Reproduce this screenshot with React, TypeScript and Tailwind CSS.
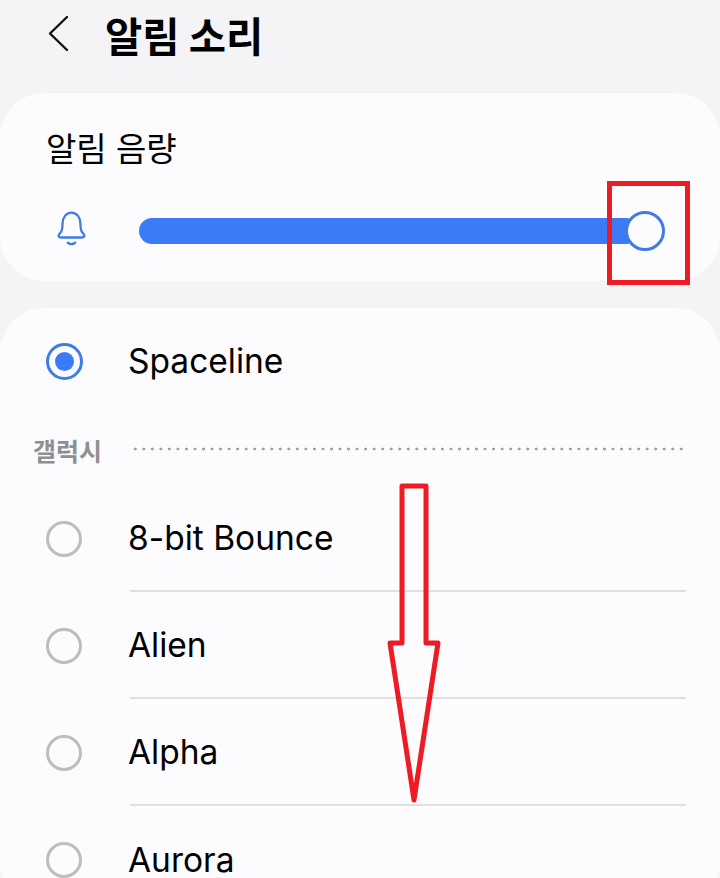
const sounds = ['8-bit Bounce', 'Alien', 'Alpha', 'Aurora'];

export default function App() {
  return (
    <div
      className="relative h-[878px] w-[720px] overflow-hidden bg-[#f4f4f6] text-black"
      style={{ fontFamily: 'Inter, "Noto Sans CJK KR", sans-serif' }}
    >
      {/* Header */}
      <div className="flex h-[93px] items-start pl-[44px] pt-[9px]">
        <svg width="28" height="40" viewBox="0 0 28 40" fill="none" className="mt-[6px]">
          <path d="M23 2 L6 18.500 L23 35" stroke="#111" strokeWidth="2.400" strokeLinecap="round" strokeLinejoin="round" />
        </svg>
        <h1 className="ml-[33px] text-[40.500px] font-bold leading-[52px]" style={{ fontFamily: '"Noto Sans CJK KR", sans-serif' }}>알림 소리</h1>
      </div>

      {/* Volume card */}
      <div className="h-[188px] rounded-[44px] bg-[#fcfcff] pl-[46px] pt-[34px]">
        <div className="text-[33px] leading-[44px]">알림 음량</div>
        <div className="mt-[44px] flex items-center">
          <svg width="36" height="38" viewBox="0 0 32 36" fill="none" stroke="#3f7ce8" strokeWidth="2.200" strokeLinecap="round" strokeLinejoin="round" className="ml-[8px] -mt-[6px]">
            <path d="M3.500 26 C3 25 3.500 24 5 22.500 C7 20.500 7 18 7 14 C7 8 10.500 3.500 15.500 3.500 C20.500 3.500 24 8 24 14 C24 18 24 20.500 26 22.500 C27.500 24 28 25 27.500 26 C27 27 26 27 25 27 L6 27 C5 27 4 27 3.500 26 Z" />
            <path d="M12 32 C14 33.500 17 33.500 19 32" />
          </svg>
          <div className="relative ml-[49px] h-[26px] w-[500px] rounded-full bg-[#3b7bf8]">
            <div className="absolute right-[-26px] top-[-7px] h-[40px] w-[40px] rounded-full border-[3.500px] border-[#3f7ce8] bg-[#fcfcff]" />
          </div>
        </div>
      </div>

      {/* Sound list */}
      <div className="mt-[27px] h-[600px] rounded-[44px] bg-[#fcfcff] pl-[46px] pr-[34px]">
        <div className="flex h-[106px] items-center">
          <div className="flex h-[37px] w-[37px] items-center justify-center rounded-full border-[3.500px] border-[#3f7ce8]">
            <div className="h-[19px] w-[19px] rounded-full bg-[#3b7bf8]" />
          </div>
          <span className="ml-[45px] text-[33.500px] leading-[44px]">Spaceline</span>
        </div>

        <div className="-ml-[13px] mt-[18px] flex h-[36px] items-center">
          <span className="text-[25px] font-bold leading-[32px] text-[#8f8f93]" style={{ fontFamily: '"Noto Sans CJK KR", sans-serif' }}>갤럭시</span>
          <div className="ml-[29px] -mt-[2px] h-[4px] flex-1 bg-[radial-gradient(circle,#a0a0a4_1.400px,transparent_1.600px)] bg-[length:8.500px_4px] bg-repeat-round" />
        </div>

        <div className="pt-[17px]">
          {sounds.map((name, i) => (
            <div key={name} className="flex h-[107px] items-center">
              <div className="h-[36px] w-[36px] shrink-0 rounded-full border-[3px] border-[#bdbdc0]" />
              <div className={`ml-[48px] flex h-full flex-1 items-center ${i < 3 ? 'border-b-2 border-[#e0e0e2]' : ''}`}>
                <span className="-ml-[2px] text-[33.500px] leading-[44px]">{name}</span>
              </div>
            </div>
          ))}
        </div>
      </div>

      {/* Red annotations */}
      <div className="absolute left-[607px] top-[181px] h-[104px] w-[83px] border-[5px] border-[#ed1c24]" />
      <svg width="60" height="330" viewBox="0 0 60 330" fill="none" className="absolute left-[384px] top-[480px]">
        <path d="M18 6 L42 6 L42 163 L54 163 L30 320 L6 163 L18 163 Z" stroke="#ed1c24" strokeWidth="5" strokeLinejoin="round" />
      </svg>
    </div>
  );
}
